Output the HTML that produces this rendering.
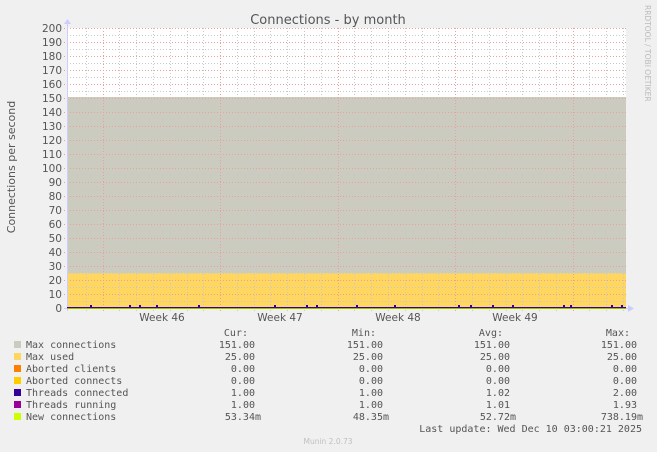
<!DOCTYPE html>
<html><head><meta charset="utf-8"><style>
html,body{margin:0;padding:0;background:#f0f0f0;}
svg{display:block}
.t{font-family:"DejaVu Sans","Liberation Sans",sans-serif;fill:#555}
.m{font-family:"DejaVu Sans Mono","Liberation Mono",monospace;font-size:10px;fill:#555}
</style></head><body>
<svg width="657" height="452" viewBox="0 0 657 452" xmlns="http://www.w3.org/2000/svg">
<rect width="657" height="452" fill="#f0f0f0"/>
<text class="t" x="328" y="24" font-size="13" text-anchor="middle" fill="#555">Connections - by month</text>
<text class="t" x="0" y="0" font-size="11" text-anchor="middle" transform="translate(15,167) rotate(-90)">Connections per second</text>
<text class="t" x="0" y="0" font-size="7.5" fill="#bbb" style="fill:#bbb" transform="translate(645,5) rotate(90)">RRDTOOL / TOBI OETIKER</text>
<rect x="67" y="28" width="559" height="280" fill="#fff"/>
<rect x="67" y="97" width="559" height="211" fill="#cccbbf"/>
<rect x="67" y="273" width="559" height="35" fill="#ffd660"/>
<g stroke-width="1" stroke-dasharray="1,2" fill="none">
<path stroke="#c8c8c8" d="M67 35.5H628M67 49.5H628M67 63.5H628M67 77.5H628M67 91.5H628M67 105.5H628M67 119.5H628M67 133.5H628M67 147.5H628M67 161.5H628M67 175.5H628M67 189.5H628M67 203.5H628M67 217.5H628M67 231.5H628M67 245.5H628M67 259.5H628M67 273.5H628M67 287.5H628M67 301.5H628"/>
<path stroke="#c8c8c8" d="M86.5 28V311M119.5 28V311M136.5 28V311M153.5 28V311M170.5 28V311M187.5 28V311M203.5 28V311M237.5 28V311M254.5 28V311M270.5 28V311M287.5 28V311M304.5 28V311M321.5 28V311M354.5 28V311M371.5 28V311M388.5 28V311M405.5 28V311M422.5 28V311M438.5 28V311M472.5 28V311M489.5 28V311M506.5 28V311M522.5 28V311M539.5 28V311M556.5 28V311M589.5 28V311M606.5 28V311M623.5 28V311"/>
<path stroke="#e8a0a0" d="M64 28.5H628M64 42.5H628M64 56.5H628M64 70.5H628M64 84.5H628M64 98.5H628M64 112.5H628M64 126.5H628M64 140.5H628M64 154.5H628M64 168.5H628M64 182.5H628M64 196.5H628M64 210.5H628M64 224.5H628M64 238.5H628M64 252.5H628M64 266.5H628M64 280.5H628M64 294.5H628"/>
<path stroke="#e8a0a0" d="M103.5 28V311M220.5 28V311M338.5 28V311M455.5 28V311M573.5 28V311"/>
</g>
<line x1="67.5" y1="24" x2="67.5" y2="311" stroke="#ccccff"/>
<line x1="64" y1="308.5" x2="630" y2="308.5" stroke="#ccccff"/>
<path d="M64 24 L67.5 19 L71 24Z" fill="#ccccff"/>
<path d="M628 305 L634 308.5 L628 312Z" fill="#ccccff"/>
<line x1="67" y1="307.5" x2="626" y2="307.5" stroke="#330099"/>
<line x1="67" y1="308.5" x2="626" y2="308.5" stroke="#99bb00"/>
<g fill="#330099"><rect x="90" y="305" width="2" height="2"/><rect x="129" y="305" width="2" height="2"/><rect x="139" y="305" width="2" height="2"/><rect x="156" y="305" width="2" height="2"/><rect x="198" y="305" width="2" height="2"/><rect x="274" y="305" width="2" height="2"/><rect x="306" y="305" width="2" height="2"/><rect x="316" y="305" width="2" height="2"/><rect x="356" y="305" width="2" height="2"/><rect x="394" y="305" width="2" height="2"/><rect x="458" y="305" width="2" height="2"/><rect x="470" y="305" width="2" height="2"/><rect x="492" y="305" width="2" height="2"/><rect x="512" y="305" width="2" height="2"/><rect x="563" y="305" width="2" height="2"/><rect x="570" y="305" width="2" height="2"/><rect x="611" y="305" width="2" height="2"/><rect x="621" y="305" width="2" height="2"/></g>
<g class="t" font-size="10.5" text-anchor="end">
<text x="62" y="32">200</text><text x="62" y="46">190</text><text x="62" y="60">180</text><text x="62" y="74">170</text><text x="62" y="88">160</text><text x="62" y="102">150</text><text x="62" y="116">140</text><text x="62" y="130">130</text><text x="62" y="144">120</text><text x="62" y="158">110</text><text x="62" y="172">100</text><text x="62" y="186">90</text><text x="62" y="200">80</text><text x="62" y="214">70</text><text x="62" y="228">60</text><text x="62" y="242">50</text><text x="62" y="256">40</text><text x="62" y="270">30</text><text x="62" y="284">20</text><text x="62" y="298">10</text><text x="62" y="312">0</text>
</g>
<g class="t" font-size="10.5" text-anchor="middle">
<text x="162" y="321">Week 46</text><text x="280" y="321">Week 47</text><text x="398" y="321">Week 48</text><text x="515" y="321">Week 49</text>
</g>
<g class="m" text-anchor="end">
<text x="248" y="336">Cur:</text><text x="376" y="336">Min:</text><text x="503" y="336">Avg:</text><text x="630" y="336">Max:</text>
</g>
<g>
<rect x="14" y="341" width="7" height="7" fill="#cccbbf"/>
<rect x="14" y="353" width="7" height="7" fill="#ffd660"/>
<rect x="14" y="365" width="7" height="7" fill="#ff8000"/>
<rect x="14" y="377" width="7" height="7" fill="#ffcc00"/>
<rect x="14" y="389" width="7" height="7" fill="#330099"/>
<rect x="14" y="401" width="7" height="7" fill="#990099"/>
<rect x="14" y="413" width="7" height="7" fill="#ccff00"/>
</g>
<g class="m">
<text x="26" y="348">Max connections</text>
<text x="26" y="360">Max used</text>
<text x="26" y="372">Aborted clients</text>
<text x="26" y="384">Aborted connects</text>
<text x="26" y="396">Threads connected</text>
<text x="26" y="408">Threads running</text>
<text x="26" y="420">New connections</text>
</g>
<g class="m" text-anchor="end">
<text x="255" y="348">151.00</text><text x="383" y="348">151.00</text><text x="510" y="348">151.00</text><text x="637" y="348">151.00</text>
<text x="255" y="360">25.00</text><text x="383" y="360">25.00</text><text x="510" y="360">25.00</text><text x="637" y="360">25.00</text>
<text x="255" y="372">0.00</text><text x="383" y="372">0.00</text><text x="510" y="372">0.00</text><text x="637" y="372">0.00</text>
<text x="255" y="384">0.00</text><text x="383" y="384">0.00</text><text x="510" y="384">0.00</text><text x="637" y="384">0.00</text>
<text x="255" y="396">1.00</text><text x="383" y="396">1.00</text><text x="510" y="396">1.02</text><text x="637" y="396">2.00</text>
<text x="255" y="408">1.00</text><text x="383" y="408">1.00</text><text x="510" y="408">1.01</text><text x="637" y="408">1.93</text>
<text x="261" y="420">53.34m</text><text x="389" y="420">48.35m</text><text x="516" y="420">52.72m</text><text x="643" y="420">738.19m</text>
<text x="642" y="432">Last update: Wed Dec 10 03:00:21 2025</text>
</g>
<text class="t" x="328" y="444" font-size="7.5" text-anchor="middle" style="fill:#c0c0c0">Munin 2.0.73</text>
</svg>
</body></html>
